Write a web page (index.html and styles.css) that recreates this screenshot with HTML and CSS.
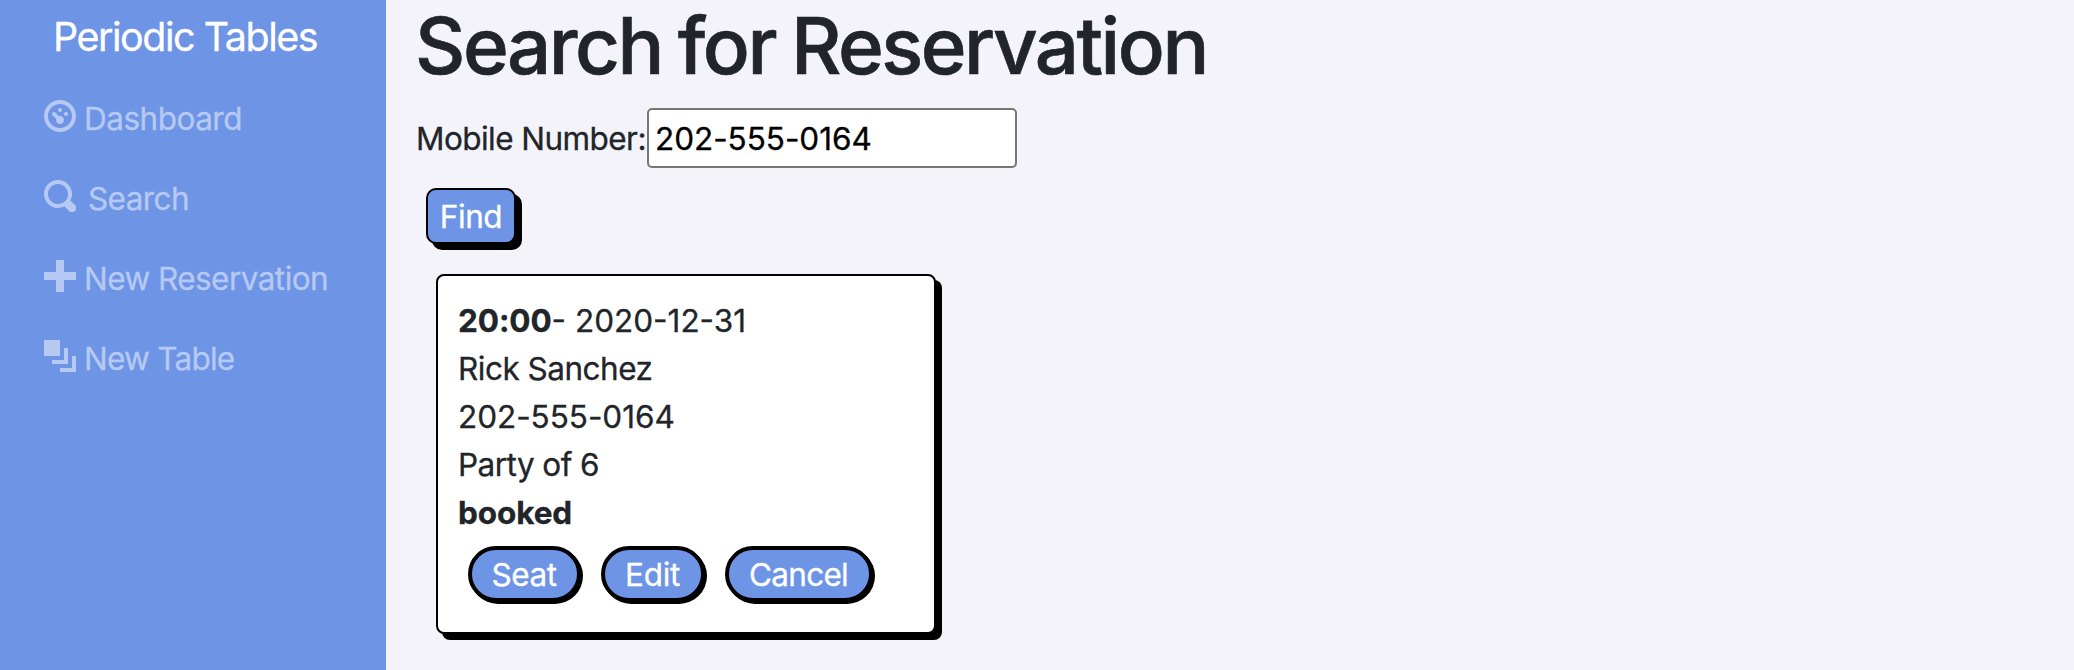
FILE: index.html
```html
<!DOCTYPE html>
<html lang="en">
<head>
<meta charset="utf-8">
<title>Periodic Tables</title>
<link rel="stylesheet" href="styles.css">
</head>
<body>
<div class="app">
  <nav class="sidebar">
    <a class="brand">Periodic Tables</a>
    <ul class="menu">
      <li><svg class="icon" viewBox="0 0 8 8"><path d="M4 0c-2.2 0-4 1.8-4 4s1.8 4 4 4 4-1.8 4-4-1.8-4-4-4zm0 1c1.66 0 3 1.34 3 3s-1.34 3-3 3-3-1.34-3-3 1.34-3 3-3zm0 1c-.28 0-.5.22-.5.5s.22.5.5.5.5-.22.5-.5-.22-.5-.5-.5zm-1.66 1a.5.5 0 0 0-.19.84l.91.91c-.02.08-.06.16-.06.25 0 .55.45 1 1 1s1-.45 1-1-.45-1-1-1c-.09 0-.17.04-.25.06l-.91-.91a.5.5 0 0 0-.5-.16zm3.16 0c-.28 0-.5.22-.5.5s.22.5.5.5.5-.22.5-.5-.22-.5-.5-.5z"/></svg><span class="t-dashboard">Dashboard</span></li>
      <li class="search-item"><svg class="icon" viewBox="0 0 8 8"><path d="M3.5 0c-1.93 0-3.5 1.57-3.5 3.5s1.57 3.5 3.5 3.5c.59 0 1.17-.14 1.66-.41a1 1 0 0 0 .13.13l1 1a1.02 1.02 0 1 0 1.44-1.44l-1-1a1 1 0 0 0-.16-.13c.27-.49.44-1.06.44-1.66 0-1.93-1.55-3.5-3.5-3.5zm0 1c1.39 0 2.5 1.11 2.5 2.5 0 .66-.24 1.27-.66 1.72-.01.01-.02.02-.03.03a1 1 0 0 0-.13.13c-.44.4-1.04.63-1.69.63-1.39 0-2.5-1.11-2.5-2.5s1.11-2.5 2.5-2.5z"/></svg><span class="t-search">Search</span></li>
      <li><svg class="icon" viewBox="0 0 8 8"><path d="M3 0v3h-3v2h3v3h2v-3h3v-2h-3v-3h-2z"/></svg><span class="t-newres">New Reservation</span></li>
      <li><svg class="icon" viewBox="0 0 8 8"><path d="M0 0v4h4v-4h-4zm5 2v3h-3v1h4v-4h-1zm2 2v3h-3v1h4v-4h-1z"/></svg><span class="t-newtable">New Table</span></li>
    </ul>
  </nav>
  <main class="content">
    <h1 class="title">Search for Reservation</h1>
    <form class="form">
      <div class="field">
        <label class="label" for="mobile">Mobile Number:</label>
        <input class="input" id="mobile" type="text" value="202-555-0164">
      </div>
      <button class="find" type="button">Find</button>
    </form>
    <section class="card">
      <p><b class="t-time">20:00</b><span class="t-date">- 2020-12-31</span></p>
      <p class="t-name">Rick Sanchez</p>
      <p class="t-phone">202-555-0164</p>
      <p class="t-party">Party of 6</p>
      <p><b class="t-status">booked</b></p>
      <div class="actions">
        <button class="pill seat" type="button">Seat</button>
        <button class="pill edit" type="button">Edit</button>
        <button class="pill cancel" type="button">Cancel</button>
      </div>
    </section>
  </main>
</div>
</body>
</html>
```

FILE: styles.css
```css
* { box-sizing: border-box; }

body {
  margin: 0;
  background: #f3f3f9;
  color: #212529;
  font-family: Inter, "Liberation Sans", sans-serif;
  font-size: 31.5px;
  font-weight: 400;
  line-height: 48px;
  letter-spacing: -0.55px;
  white-space: nowrap;
  -webkit-text-stroke: 0.3px currentColor;
}

.app { display: flex; height: 670px; overflow: hidden; }

.sidebar {
  width: 386px;
  flex: none;
  background: #6e94e5;
  color: #b6c9f2;
}

.brand {
  display: block;
  padding: 7px 0 0 53px;
  height: 94px;
  color: #fff;
  font-size: 39.4px;
  line-height: 60px;
  letter-spacing: -1.45px;
}

.menu { list-style: none; margin: 0; padding: 0 0 0 44px; }
.menu li { display: flex; height: 80px; gap: 8px; padding-top: 1px; }
.menu .search-item { gap: 12px; }
.icon { width: 32px; height: 32px; margin-top: 5px; fill: currentColor; flex: none; }
.t-dashboard { letter-spacing: -0.5px; }
.t-search { letter-spacing: -0.6px; }
.t-newres { letter-spacing: -0.55px; }
.t-newtable { letter-spacing: -0.75px; }

.content { flex: 1; padding: 0 0 0 30px; }

.title {
  height: 108px;
  margin: 0 0 0 -1px;
  font-size: 78px;
  line-height: 92px;
  font-weight: 500;
  letter-spacing: -2.5px;
  word-spacing: -2.4px;
  -webkit-text-stroke: 0.6px currentColor;
}

.field { display: flex; height: 60px; }
.label { width: 231px; padding-top: 7px; letter-spacing: -0.55px; }

.input {
  width: 370px;
  height: 60px;
  margin: 0;
  padding: 2px 6px;
  border: 2px solid #767676;
  border-radius: 5px;
  background: #fff;
  color: #000;
  font: inherit;
  letter-spacing: -0.05px;
}

.find {
  display: flex;
  justify-content: center;
  width: 90px;
  height: 56px;
  margin: 20px 0 0 10px;
  padding: 3px 0 1px;
  border: 2px solid #000;
  border-radius: 10px;
  background: #6e94e5;
  box-shadow: 6px 6px #000;
  color: #fff;
  font: inherit;
  letter-spacing: -0.45px;
}

.card {
  width: 500px;
  height: 360px;
  margin: 30px 0 0 20px;
  padding: 21px 20px 19px;
  border: 2px solid #000;
  border-radius: 8px;
  background: #fff;
  box-shadow: 6px 6px #000;
}

.card p { margin: 0; }
.t-time, .t-status { font-weight: 700; letter-spacing: -0.1px; }
.t-date { letter-spacing: 0; }
.t-name { letter-spacing: -0.5px; }
.t-phone { letter-spacing: -0.05px; }

.actions { display: flex; gap: 20px; padding: 9px 0 0 10px; }

.pill {
  display: flex;
  justify-content: center;
  height: 56px;
  padding: 1px 1px 0 0;
  border: 4px solid #000;
  border-radius: 28px;
  background: #6e94e5;
  box-shadow: 2px 2px #000;
  color: #fff;
  font: inherit;
  letter-spacing: -0.45px;
}

.seat { width: 113px; }
.edit { width: 104px; letter-spacing: -0.3px; }
.cancel { width: 148px; letter-spacing: -0.7px; }
```
